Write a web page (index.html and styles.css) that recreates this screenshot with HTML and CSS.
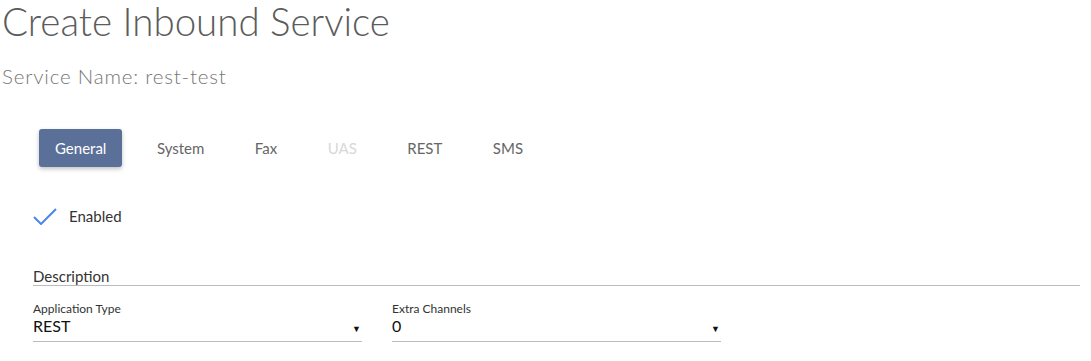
FILE: index.html
```html
<!DOCTYPE html>
<html>
<head lang="en">
    <meta charset="UTF-8">
    <title>Create Inbound Service</title>
    <link rel="stylesheet" href="styles.css">
</head>
<body>
    <div class="page">
        <h1 class="title">Create Inbound Service</h1>
        <h2 class="subtitle">Service Name: rest-test</h2>

        <div class="form">
            <ul class="tabs">
                <li class="active">General</li>
                <li>System</li>
                <li>Fax</li>
                <li class="disabled">UAS</li>
                <li>REST</li>
                <li>SMS</li>
            </ul>

            <div class="check">
                <svg class="tick" width="24" height="17" viewBox="0 0 24 17">
                    <path d="M1 9 L8 16 L23 1" fill="none" stroke="#4a86e8" stroke-width="2"/>
                </svg>
                <span>Enabled</span>
            </div>

            <div class="desc">Description</div>

            <div class="fields">
                <div class="field">
                    <label>Application Type</label>
                    <div class="select">
                        <span>REST</span>
                        <em>&#9660;</em>
                    </div>
                </div>
                <div class="field">
                    <label>Extra Channels</label>
                    <div class="select">
                        <span>0</span>
                        <em>&#9660;</em>
                    </div>
                </div>
            </div>
        </div>
    </div>
</body>
</html>
```
FILE: styles.css
```css
* {
    padding: 0;
    margin: 0;
    font-style: normal;
}
body,html{
    height: 100%;
    overflow: hidden;
    background: #fff;
}
body{
    font-family: Lato, "Liberation Sans", sans-serif;
    color: #333;
}
.page{
    padding: 0 11px 0 2px;
}
.title{
    font-weight: 300;
    font-size: 38.5px;
    line-height: 40px;
    color: #5c5c5c;
    padding-top: 1px;
}
.subtitle{
    font-weight: 300;
    font-size: 20.5px;
    letter-spacing: 0.8px;
    line-height: 24px;
    color: #777;
    margin-top: 23px;
}
.form{
    padding-left: 31px;
}
.tabs{
    list-style: none;
    display: flex;
    gap: 18.5px;
    margin: 41px 0 0 6px;
}
.tabs li{
    font-size: 15px;
    line-height: 38px;
    height: 38px;
    padding: 0 16px;
    color: #666;
    cursor: pointer;
}
.tabs li.active{
    background: #5a7099;
    color: #fff;
    border-radius: 3px;
    box-shadow: 0 2px 4px rgba(0,0,0,.25);
}
.tabs li.disabled{
    color: #d8d8d8;
}
.check{
    display: flex;
    align-items: center;
    margin-top: 40px;
    height: 18px;
}
.tick{
    display: block;
}
.check span{
    font-size: 15px;
    margin-left: 12px;
    color: #333;
}
.desc{
    margin-top: 43px;
    font-size: 15px;
    line-height: 17px;
    color: #333;
    border-bottom: 1px solid #bbb;
}
.fields{
    display: flex;
    gap: 30px;
    margin-top: 16px;
}
.field{
    width: 329px;
}
.field label{
    display: block;
    font-size: 12px;
    line-height: 14px;
    color: #333;
}
.select{
    display: flex;
    justify-content: space-between;
    align-items: flex-start;
    border-bottom: 1px solid #bbb;
    height: 25px;
}
.select span{
    font-size: 16px;
    line-height: 20px;
    color: #111;
}
.select em{
    font-size: 9px;
    line-height: 20px;
    padding-top: 3px;
    color: #111;
    margin-right: 1px;
}
```
